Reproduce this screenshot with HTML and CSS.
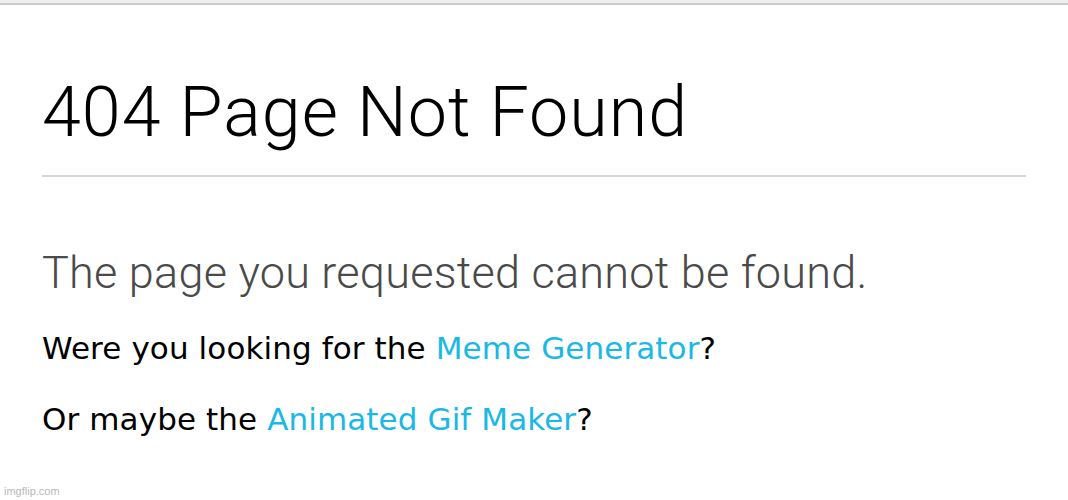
FILE: index.html
```html
<!DOCTYPE html>
<html>
<head>
<meta charset="utf-8">
<link rel="stylesheet" href="styles.css">
</head>
<body>
<div class="topbar"></div>
<main class="content">
  <h1 class="title">404 Page Not Found</h1>
  <h2 class="subtitle">The page you requested cannot be found.</h2>
  <p class="line">Were you looking for the <a href="#" class="link">Meme Generator</a>?</p>
  <p class="line">Or maybe the <a href="#" class="link">Animated Gif Maker</a>?</p>
</main>
<div class="watermark">imgflip.com</div>
</body>
</html>
```
FILE: styles.css
```css
html, body {
  margin: 0;
  padding: 0;
  background: #fff;
  height: 500px;
  overflow: hidden;
}
body {
  font-family: "Liberation Sans", Arial, sans-serif;
  color: #000;
  position: relative;
}
.topbar {
  height: 3px;
  background: #eeeeee;
  border-bottom: 2px solid #cccccc;
}
.content {
  margin: 0 42px;
}
.title {
  font-family: Roboto, "Liberation Sans", sans-serif;
  font-weight: 300;
  font-size: 70px;
  line-height: 70px;
  letter-spacing: 1px;
  margin: 0;
  padding: 72px 0 28px 0;
  border-bottom: 2px solid #d6d6d6;
}
.subtitle {
  font-family: Roboto, "Liberation Sans", sans-serif;
  font-weight: 300;
  font-size: 45px;
  line-height: 50px;
  letter-spacing: 0.25px;
  color: #4a4a4a;
  margin: 71px 0 30px 0;
}
.line {
  font-family: "DejaVu Sans", "Liberation Sans", sans-serif;
  font-size: 31px;
  line-height: 40px;
  letter-spacing: 0.1px;
  margin: 0 0 31px 0;
}
.link {
  color: #1ab8e8;
  text-decoration: none;
}
.watermark {
  position: absolute;
  left: 4px;
  bottom: 3px;
  font-size: 11px;
  color: #b8b8b8;
}
```
